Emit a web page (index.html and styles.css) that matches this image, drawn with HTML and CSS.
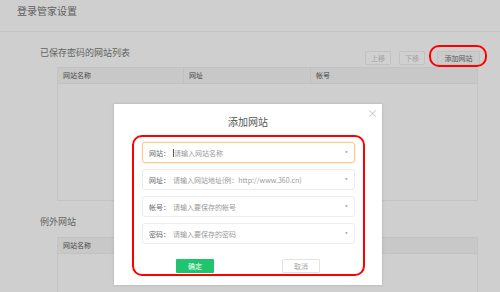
FILE: index.html
```html
<!DOCTYPE html>
<html lang="zh-CN">
<head>
    <meta charset="UTF-8">
    <title>登录管家设置</title>
    <link rel="stylesheet" href="styles.css">
</head>
<body>
    <div class="page-head">登录管家设置</div>

    <div class="section">
        <div class="section-head">
            <span class="section-title">已保存密码的网站列表</span>
            <div class="actions">
                <button class="btn btn-off">上移</button>
                <button class="btn btn-off">下移</button>
                <div class="ring-wrap">
                    <button class="btn btn-add">添加网站</button>
                    <span class="ring"></span>
                </div>
            </div>
        </div>
        <div class="table table-saved">
            <div class="table-row">
                <div class="col col-name">网站名称</div>
                <div class="col col-url">网址</div>
                <div class="col col-user">帐号</div>
            </div>
        </div>

        <div class="section-head section-head-2">
            <span class="section-title">例外网站</span>
        </div>
        <div class="table table-except">
            <div class="table-row">
                <div class="col col-name">网站名称</div>
            </div>
        </div>
    </div>

    <div class="modal">
        <span class="close">×</span>
        <div class="modal-title">添加网站</div>
        <div class="form-box">
            <div class="field field-active">
                <span class="label">网站：</span>
                <span class="caret"></span>
                <span class="hint">请输入网站名称</span>
                <span class="star">*</span>
            </div>
            <div class="field">
                <span class="label">网址：</span>
                <span class="hint">请输入网站地址(例：http://www.360.cn)</span>
                <span class="star">*</span>
            </div>
            <div class="field">
                <span class="label">帐号：</span>
                <span class="hint">请输入要保存的帐号</span>
                <span class="star">*</span>
            </div>
            <div class="field">
                <span class="label">密码：</span>
                <span class="hint">请输入要保存的密码</span>
                <span class="star">*</span>
            </div>
            <div class="form-buttons">
                <button class="btn-ok">确定</button>
                <button class="btn-cancel">取消</button>
            </div>
        </div>
    </div>
</body>
</html>
```

FILE: styles.css
```css
body {
    margin: 0;
    padding: 0;
    height: 292px;
    overflow: hidden;
    background-color: #cfcfcf;
    font-family: "Noto Sans CJK SC", "Liberation Sans", sans-serif;
    color: #666;
    position: relative;
}

.page-head {
    height: 31px;
    line-height: 22px;
    padding-left: 17px;
    font-size: 10px;
    color: #5e5e5e;
    border-bottom: 1px solid #c3c3c3;
}

.section {
    padding: 0 20px 0 40px;
}

.section-head {
    display: flex;
    justify-content: space-between;
    align-items: flex-end;
    height: 21px;
    margin-top: 14px;
}

.section-head-2 {
    height: 36px;
    margin-top: 0;
}

.section-title {
    align-self: flex-start;
    font-size: 9px;
    line-height: 14px;
    color: #626262;
}

.section-head-2 .section-title {
    padding-top: 14px;
}

.actions {
    display: flex;
    align-items: center;
    gap: 8px;
    padding-bottom: 2px;
}

.btn {
    height: 14px;
    padding: 0;
    font-family: inherit;
    font-size: 7px;
    line-height: 12px;
    color: #a3a3a3;
    background-color: #d0d0d0;
    border: 1px solid #c2c2c2;
    border-radius: 1px;
}

.btn-off {
    width: 26px;
}

.btn-add {
    width: 43px;
    color: #555;
    background-color: #cbcbcb;
}

.ring-wrap {
    position: relative;
    display: flex;
    margin-left: 4px;
}

.ring {
    position: absolute;
    left: -8px;
    right: -7px;
    top: -6px;
    bottom: -2px;
    border: 2px solid #f00;
    border-radius: 10px;
}

.table {
    margin: 0 2px 0 17px;
    border-left: 1px solid #c4c4c4;
    border-right: 1px solid #c4c4c4;
}

.table-saved {
    height: 133px;
    border-bottom: 1px solid #c4c4c4;
}

.table-except {
    height: 60px;
}

.table-row {
    display: flex;
    height: 15px;
    background-color: #c8c8c8;
    border-top: 1px solid #c2c2c2;
    border-bottom: 1px solid #c2c2c2;
}

.col {
    font-size: 7px;
    line-height: 15px;
    color: #474747;
    padding-left: 5px;
    box-sizing: border-box;
}

.col-name {
    width: 126px;
    border-right: 1px solid #c0c0c0;
}

.col-url {
    width: 127px;
    border-right: 1px solid #c0c0c0;
}

.col-user {
    flex: 1;
}

.modal {
    position: absolute;
    left: 114px;
    top: 104px;
    width: 268px;
    height: 181px;
    background-color: #fff;
    box-shadow: 0 0 3px rgba(0, 0, 0, 0.15);
}

.close {
    position: absolute;
    right: 4px;
    top: 1px;
    font-size: 11px;
    color: #c8c8c8;
}

.modal-title {
    text-align: center;
    font-size: 10px;
    line-height: 14px;
    padding-top: 11px;
    color: #555;
}

.form-box {
    margin: 6px 0 0 18px;
    padding: 5px 8px 0 8px;
    box-sizing: border-box;
    width: 233px;
    height: 141px;
    border: 2px solid #f00;
    border-radius: 10px;
}

.field {
    display: flex;
    align-items: center;
    height: 21px;
    margin-bottom: 6px;
    padding: 0 6px;
    border: 1px solid #ececec;
    border-radius: 3px;
    box-sizing: border-box;
    font-size: 7px;
}

.field-active {
    border-color: #f8c887;
    box-shadow: 0 0 2px rgba(248, 200, 135, 0.6);
}

.label {
    width: 24px;
    color: #666;
}

.caret {
    width: 1px;
    height: 8px;
    background-color: #555;
}

.hint {
    flex: 1;
    color: #9a9a9a;
}

.star {
    color: #888;
    font-size: 7px;
}

.form-buttons {
    display: flex;
    gap: 68px;
    margin: 15px 0 0 34px;
}

.btn-ok,
.btn-cancel {
    width: 38px;
    height: 14px;
    padding: 0;
    font-family: inherit;
    font-size: 7px;
    border-radius: 1px;
}

.btn-ok {
    color: #fff;
    background-color: #1fc46e;
    border: none;
}

.btn-cancel {
    color: #a8a8a8;
    background-color: #fff;
    border: 1px solid #e3e3e3;
}
```
